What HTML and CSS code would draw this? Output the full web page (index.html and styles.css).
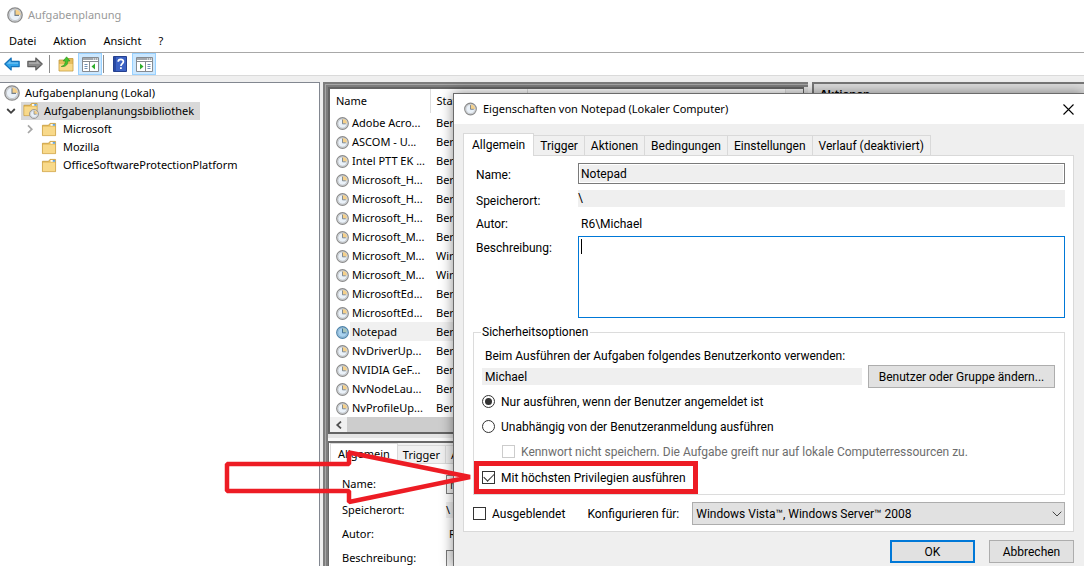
FILE: index.html
```html
<!DOCTYPE html>
<html lang="de">
<head>
<meta charset="utf-8">
<title>Aufgabenplanung</title>
<link rel="stylesheet" href="styles.css">
</head>
<body>
<svg class="defs" aria-hidden="true">
  <symbol id="clock" viewBox="0 0 16 16">
    <circle cx="8" cy="8" r="7.2" fill="#d9dcdf" stroke="#8a8a8a" stroke-width="1.3"/>
    <circle cx="8" cy="8" r="5.6" fill="#eaf1f8" stroke="#b4b8bc" stroke-width=".7"/>
    <path d="M8 8V2.4A5.6 5.6 0 0 1 13.6 8Z" fill="#f5d08a"/>
    <path d="M8 3.2V8.4H12" fill="none" stroke="#75808a" stroke-width="1.1"/>
  </symbol>
  <symbol id="clocksel" viewBox="0 0 16 16">
    <circle cx="8" cy="8" r="7.2" fill="#a3c6e0" stroke="#4c82a8" stroke-width="1.3"/>
    <circle cx="8" cy="8" r="5.6" fill="#a9d2ee" stroke="#7fa9c8" stroke-width=".7"/>
    <path d="M8 8V2.4A5.6 5.6 0 0 1 13.6 8Z" fill="#a9c5b8"/>
    <path d="M8 3.2V8.4H12" fill="none" stroke="#35658c" stroke-width="1.1"/>
  </symbol>
  <symbol id="folder" viewBox="0 0 16 16">
    <path d="M1 3.5H7.500L9 1.500H15V14.5H1Z" fill="#e6bd5c" stroke="#c99c3e" stroke-width=".9"/>
    <path d="M9.600 2.2H14.5V4H9.600Z" fill="#fff"/><path d="M12 2.2H14.5V4H12Z" fill="#5aa0dc"/>
    <path d="M1.4 5H14.6V14.2H1.4Z" fill="#f8d98a"/>
  </symbol>
  <symbol id="arrow" viewBox="0 0 16 14">
    <path d="M.8 7L7.2 1V4.4H15.2V9.6H7.2V13Z" stroke-width="1.1" stroke-linejoin="round"/>
    <path d="M3 6.8L6.4 3.6V5.6H14V6.8Z" fill="#fff" fill-opacity=".35" stroke="none"/>
  </symbol>
  <symbol id="pane" viewBox="0 0 17 15">
    <path d="M.5 .5H16.5V14.5H.5Z" fill="#fff" stroke="#868b91"/>
    <path d="M1 1H16V4H1Z" fill="#a3a8ad"/><path d="M1 3.5H16" stroke="#fff"/><path d="M1 4.5H16" stroke="#868b91"/>
    <path d="M11 2H12M13 2H14M15 2H16" stroke="#fff"/>
  </symbol>
</svg>

<div class="app">
  <header class="titlebar"><svg class="ic16"><use href="#clock"/></svg><span>Aufgabenplanung</span></header>
  <nav class="menubar">
    <button>Datei</button><button>Aktion</button><button>Ansicht</button><button>?</button>
  </nav>
  <div class="toolbar">
    <button class="tool" aria-label="Zurück"><svg class="arr back"><use href="#arrow"/></svg></button>
    <button class="tool" aria-label="Vorwärts"><svg class="arr fwd"><use href="#arrow"/></svg></button>
    <i class="sep"></i>
    <button class="tool" aria-label="Nach oben">
      <svg class="ic16" viewBox="0 0 16 16"><path d="M1 4H8L9.5 2.5H15V15H1Z" fill="#e6bd5c" stroke="#c29a3e" stroke-width=".8"/><path d="M1.5 8H14.5V14.5H1.5Z" fill="#f8d98a"/><path d="M3.2 10.5C6.5 9.5 7.4 7.6 7.3 5H5.2L8.6 .8L12 5H9.8C10 8.4 8 11 3.2 10.5Z" fill="#45c32e" stroke="#2d8f1c" stroke-width=".6"/></svg>
    </button>
    <button class="tool on" aria-label="Konsolenstruktur">
      <svg class="pn" viewBox="0 0 17 15"><use href="#pane"/><path d="M7.5 5V14" stroke="#868b91"/><path d="M2.5 7.5H5.5M2.5 9.5H5.5M2.5 11.5H5.5" stroke="#6f90b5"/><path d="M13 6.5V12.5L9.5 9.5Z" fill="#2fae2a"/></svg>
    </button>
    <i class="sep"></i>
    <button class="tool" aria-label="Hilfe">
      <svg class="help" viewBox="0 0 14 16"><path d="M.5 .5H13.5V15.5H.5Z" fill="#3c62c4" stroke="#24408f"/><path d="M1 1H3V15H1Z" fill="#2a4aa3"/><path d="M5.2 5.8C5.2 2.6 10.6 2.7 10.4 5.6C10.3 7.6 8 7.5 7.9 10" fill="none" stroke="#fff" stroke-width="1.7"/><path d="M7 11.2H8.8V13H7Z" fill="#fff"/></svg>
    </button>
    <button class="tool on" aria-label="Aktionsbereich">
      <svg class="pn" viewBox="0 0 17 15"><use href="#pane"/><path d="M9.5 5V14" stroke="#868b91"/><path d="M11.5 7.5H14.5M11.5 9.5H14.5M11.5 11.5H14.5" stroke="#6f90b5"/><path d="M4 6.5V12.5L7.5 9.5Z" fill="#2fae2a"/></svg>
    </button>
  </div>

  <main class="work">
    <ul class="tree">
      <li class="root"><svg class="ic16"><use href="#clock"/></svg><span>Aufgabenplanung (Lokal)</span></li>
      <li class="lib"><svg class="chev" viewBox="0 0 10 10"><path d="M1.2 3L5 6.8L8.8 3" fill="none" stroke="#404040" stroke-width="1.8"/></svg>
        <span class="sel"><svg class="lic" viewBox="0 0 18 18"><use href="#folder" x="1" y="0" width="15" height="15"/><use href="#clock" x="7" y="7" width="10" height="10"/></svg>Aufgabenplanungsbibliothek</span></li>
      <li class="sub"><svg class="chev" viewBox="0 0 10 10"><path d="M3 1.4L6.8 5.2L3 9" fill="none" stroke="#a6a6a6" stroke-width="1.7"/></svg><svg class="fic"><use href="#folder"/></svg><span>Microsoft</span></li>
      <li class="sub"><i class="chev"></i><svg class="fic"><use href="#folder"/></svg><span>Mozilla</span></li>
      <li class="sub"><i class="chev"></i><svg class="fic"><use href="#folder"/></svg><span>OfficeSoftwareProtectionPlatform</span></li>
    </ul>

    <section class="center">
      <div class="list">
        <div class="scroll">
        <table>
          <thead><tr><th class="c1">Name</th><th class="c2">Status</th><th></th></tr></thead>
          <tbody>
            <tr><td><svg><use href="#clock"/></svg>Adobe Acro...</td><td>Bereit</td><td></td></tr>
            <tr><td><svg><use href="#clock"/></svg>ASCOM - U...</td><td>Bereit</td><td></td></tr>
            <tr><td><svg><use href="#clock"/></svg>Intel PTT EK ...</td><td>Bereit</td><td></td></tr>
            <tr><td><svg><use href="#clock"/></svg>Microsoft_H...</td><td>Bereit</td><td></td></tr>
            <tr><td><svg><use href="#clock"/></svg>Microsoft_H...</td><td>Bereit</td><td></td></tr>
            <tr><td><svg><use href="#clock"/></svg>Microsoft_H...</td><td>Bereit</td><td></td></tr>
            <tr><td><svg><use href="#clock"/></svg>Microsoft_M...</td><td>Bereit</td><td></td></tr>
            <tr><td><svg><use href="#clock"/></svg>Microsoft_M...</td><td>Wird ausgeführt</td><td></td></tr>
            <tr><td><svg><use href="#clock"/></svg>Microsoft_M...</td><td>Wird ausgeführt</td><td></td></tr>
            <tr><td><svg><use href="#clock"/></svg>MicrosoftEd...</td><td>Bereit</td><td></td></tr>
            <tr><td><svg><use href="#clock"/></svg>MicrosoftEd...</td><td>Bereit</td><td></td></tr>
            <tr class="cur"><td><svg><use href="#clocksel"/></svg>Notepad</td><td>Bereit</td><td></td></tr>
            <tr><td><svg><use href="#clock"/></svg>NvDriverUp...</td><td>Bereit</td><td></td></tr>
            <tr><td><svg><use href="#clock"/></svg>NVIDIA GeF...</td><td>Bereit</td><td></td></tr>
            <tr><td><svg><use href="#clock"/></svg>NvNodeLau...</td><td>Bereit</td><td></td></tr>
            <tr><td><svg><use href="#clock"/></svg>NvProfileUp...</td><td>Bereit</td><td></td></tr>
          </tbody>
        </table>
        <i class="vbar"></i>
        </div>
        <div class="hbar"><button aria-label="Nach links"><svg viewBox="0 0 8 8"><path d="M6 .5L2.2 4L6 7.5" fill="none" stroke="#505050" stroke-width="1.7"/></svg></button></div>
      </div>
      <div class="detail">
        <div class="tabs small"><button class="active">Allgemein</button><button>Trigger</button><button>Aktionen</button></div>
        <div class="props">
          <label for="pn">Name:</label><input id="pn" value="Notepad" readonly>
          <span>Speicherort:</span><span class="loc">\</span>
          <span>Autor:</span><span class="aut">R6\Michael</span>
          <label for="pb">Beschreibung:</label><textarea id="pb" readonly></textarea>
        </div>
      </div>
    </section>

    <aside class="actions"><h2>Aktionen</h2></aside>
  </main>
</div>

<section class="dialog" role="dialog" aria-labelledby="dt">
  <header><svg><use href="#clock"/></svg><h1 id="dt">Eigenschaften von Notepad (Lokaler Computer)</h1>
    <button aria-label="Schließen"><svg viewBox="0 0 11 11"><path d="M.5 .5L10.5 10.5M10.5 .5L.5 10.5" stroke="#000" stroke-width="1.1"/></svg></button></header>
  <div class="body">
    <div class="tabs"><button class="active">Allgemein</button><button>Trigger</button><button>Aktionen</button><button>Bedingungen</button><button>Einstellungen</button><button>Verlauf (deaktiviert)</button></div>
    <div class="panel">
      <div class="form">
        <label for="n">Name:</label><input id="n" class="name" value="Notepad" readonly>
        <span class="low">Speicherort:</span><span class="flat">\</span>
        <span class="low">Autor:</span><span class="author">R6\Michael</span>
        <label for="b" class="top">Beschreibung:</label><div class="desc"><textarea id="b"></textarea><i class="caret"></i></div>
      </div>
      <fieldset>
        <legend>Sicherheitsoptionen</legend>
        <p>Beim Ausführen der Aufgaben folgendes Benutzerkonto verwenden:</p>
        <div class="account"><span class="flat">Michael</span><button class="btn">Benutzer oder Gruppe ändern...</button></div>
        <label class="opt"><input type="radio" name="run" checked>Nur ausführen, wenn der Benutzer angemeldet ist</label>
        <label class="opt"><input type="radio" name="run">Unabhängig von der Benutzeranmeldung ausführen</label>
        <label class="opt off"><input type="checkbox" disabled>Kennwort nicht speichern. Die Aufgabe greift nur auf lokale Computerressourcen zu.</label>
        <label class="opt priv"><input type="checkbox" checked>Mit höchsten Privilegien ausführen</label>
      </fieldset>
      <div class="config">
        <label class="hide"><input type="checkbox">Ausgeblendet</label>
        <label for="os">Konfigurieren für:</label>
        <div class="pick"><select id="os"><option>Windows Vista™, Windows Server™ 2008</option></select><svg viewBox="0 0 10 6"><path d="M.7 .7L5 5L9.3 .7" fill="none" stroke="#444"/></svg></div>
      </div>
    </div>
    <footer><button class="btn ok">OK</button><button class="btn">Abbrechen</button></footer>
  </div>
</section>

<svg class="marks" viewBox="0 0 480 60" aria-hidden="true" fill="none" stroke="#ed1c24">
  <path d="M3 19H125V7.500L246 32L125 57V46H3Z" stroke-width="4.500" stroke-linejoin="bevel"/>
  <path d="M252.500 18.500H471.500V46.500H252.500Z" stroke-width="5"/>
</svg>
</body>
</html>
```
FILE: styles.css
```css
* { box-sizing: border-box; }
body { margin: 0; overflow: hidden; background: #fff; color: #000; font: 11px/16px "Noto Sans", "Open Sans", sans-serif; }
button, input, select, textarea { font: inherit; color: inherit; margin: 0; padding: 0; border: 0; border-radius: 0; background: none; outline: 0; }
svg { display: block; flex: none; }
.defs { position: absolute; width: 0; height: 0; }
.ic16 { width: 16px; height: 16px; }

.app { display: flex; flex-direction: column; height: 100vh; background: #efefef; }
.titlebar { display: flex; align-items: center; gap: 5px; height: 29px; padding-left: 7px; background: #fff; color: #999; }
.menubar { display: flex; gap: 17px; align-items: center; height: 23px; padding-left: 9px; background: #fff; }
.toolbar { display: flex; align-items: center; height: 24px; background: #fff; border-top: 1px solid #a8a8a8; border-bottom: 1px solid #dadada; }
.tool { display: flex; align-items: center; justify-content: center; width: 23px; height: 22px; }
.tool.on { width: 24px; margin-left: 1px; background: #cce8ff; border: 1px solid #99d1ff; }
.sep { width: 1px; height: 18px; margin: 0 4px 0 3px; background: #8d8d8d; }
.on + .sep { margin-left: 1px; }
.arr { width: 16px; height: 14px; }
.back { fill: #2ea3ea; stroke: #1673ba; }
.fwd { fill: #8b8b8b; stroke: #606060; transform: scaleX(-1); }
.pn { width: 17px; height: 15px; }
.help { width: 14px; height: 16px; }

.work { flex: 1; display: flex; min-height: 0; padding-top: 6px; }
.tree { flex: 0 0 320px; margin: 0; padding: 1px 0 0; list-style: none; background: #fff; border: solid #828790; border-width: 1px 1px 0 0; }
.tree li { display: flex; align-items: center; height: 18px; }
.root { padding-left: 4px; gap: 5px; }
.lib { padding-left: 6px; gap: 5px; }
.sel { display: flex; align-items: center; gap: 4px; height: 18px; padding: 0 6px 0 1px; background: #d9d9d9; }
.lic { width: 18px; height: 18px; }
.chev { width: 10px; height: 10px; flex: none; }
.sub { padding-left: 25px; gap: 6px; }
.fic { width: 16px; height: 15px; }

.center { flex: 0 0 485px; display: flex; flex-direction: column; gap: 7px; margin-left: 3px; padding: 5px 4px 0 5px; background: #e4e4e4; box-shadow: inset 2px 2px #7d7d7d, inset 3px 3px #a6a6a6, inset 5px 5px #7d7d7d; }
.list { border: solid #646464; border-width: 2px 1px 2px 2px; background: #fff; }
.scroll { display: flex; overflow: hidden; }
table { flex: 1; border-collapse: collapse; table-layout: fixed; }
th, td { height: 19px; padding: 0 0 0 6px; text-align: left; font-weight: 400; line-height: 16px; white-space: nowrap; }
th { height: 24px; border-right: 1px solid #dedede; }
.c1 { width: 100px; }
.c2 { width: 97px; }
td svg { display: inline-block; width: 13px; height: 13px; margin-right: 3px; vertical-align: -3px; }
.cur td { background: #f0f0f0; }
.cur td:first-child { background: linear-gradient(90deg, #fff 20px, #f0f0f0 20px); }
.vbar { width: 17px; background: #f0f0f0; }
.hbar { height: 15px; background: #cdcdcd; }
.hbar button { display: flex; align-items: center; justify-content: center; width: 17px; height: 15px; background: #f0f0f0; }
.hbar svg { width: 8px; height: 8px; }
.detail { flex: 1; min-height: 0; overflow: hidden; padding-left: 1px; background: #fff; border: solid #696969; border-width: 2px 0 0 1px; box-shadow: 0 -3px #f8f8f8; }

.tabs { display: flex; align-items: flex-end; }
.tabs button { height: 20px; padding: 0 6px; background: #f0f0f0; border: solid #d9d9d9; border-width: 1px 1px 0 0; white-space: nowrap; }
.tabs .active { height: 23px; padding: 0 8px; background: #fff; border-left-width: 1px; margin-bottom: -1px; position: relative; }
.small { border-bottom: 1px solid #d9d9d9; background: #f0f0f0; }
.tabs.small button { height: 18px; padding: 0 5px; }
.tabs.small .active { height: 21px; padding: 0 7px; }
.props { display: grid; grid-template-columns: 104px 1fr; grid-template-rows: 18px 17px 16px 60px; row-gap: 8px; padding: 11px 10px 0 12px; align-items: center; }
.props input { height: 19px; padding-left: 3px; background: #efefef; border: 1px solid #7a7a7a; }
.props .loc { background: #efefef; }
.props .aut { padding-left: 3px; }
.props label[for="pb"] { align-self: start; }
.props textarea { height: 60px; background: #efefef; border: 1px solid #7a7a7a; resize: none; }

.actions { flex: 1; margin-left: 4px; background: #fff; border: solid #777; border-width: 2px 0 0 2px; }
.actions h2 { margin: 0; padding-left: 6px; font-size: 11px; line-height: 20px; background: #dcdcdc; }

.dialog { position: absolute; left: 453px; top: 93px; right: 0; bottom: 0; background: #efefef; border: solid #6b6b6b; border-width: 1px 0 0 1px; box-shadow: 0 0 12px rgba(0, 0, 0, .45); font: 12px/14px Roboto, "Liberation Sans", sans-serif; }
.dialog header { display: flex; align-items: center; gap: 6px; height: 30px; padding: 0 10px; background: #fff; font-family: "Noto Sans", sans-serif; }
.dialog header > svg { width: 13px; height: 14px; }
.dialog h1 { flex: 1; margin: 0; font-size: 11px; font-weight: 400; }
.dialog header button svg { width: 11px; height: 11px; }
.body { padding: 9px 10px 0 9px; }
.panel { padding: 7px 8px 6px 9px; background: #fff; border: 1px solid #d9d9d9; }
.form { display: grid; grid-template-columns: 102px 1fr; grid-template-rows: 21px 17px 17px 82px; row-gap: 6px; padding-left: 3px; align-items: center; }
.name { height: 21px; padding: 1px 0 0 2px; background: #efefef; border: 1px solid #7a7a7a; box-shadow: inset 0 0 0 1px #fff; }
.flat { height: 17px; line-height: 17px; background: #efefef; }
.low, .author { padding-top: 4px; }
.author { padding-left: 3px; }
.form label { padding-top: 2px; }
.form .top { align-self: start; padding-top: 5px; }
.desc { position: relative; height: 82px; }
.desc textarea { display: block; width: 100%; height: 82px; padding: 3px; border: 1px solid #0078d7; background: #fff; resize: none; }
.caret { position: absolute; left: 3px; top: 3px; width: 1px; height: 15px; background: #000; }
fieldset { margin: 7px 0 0; padding: 10px 9px 4px 8px; border: 1px solid #dcdcdc; min-width: 0; }
legend { padding: 0 2px 0 1px; margin-left: -1px; }
fieldset p { margin: 0 0 2px; padding-left: 3px; }
.account { display: flex; align-items: center; gap: 6px; margin-bottom: 1px; }
.account .flat { flex: 1; padding-left: 3px; line-height: 19px; }
.btn { height: 23px; padding: 0 6px; background: #e1e1e1; border: 1px solid #adadad; white-space: nowrap; }
.account .btn { min-width: 187px; }
.opt { display: flex; align-items: center; gap: 6px; height: 25px; white-space: nowrap; }
.off { padding-left: 20px; color: #6d6d6d; }
.priv { margin-top: 1px; }
input[type="radio"], input[type="checkbox"] { appearance: none; flex: none; width: 13px; height: 13px; border: 1px solid #333; background: #fff; display: grid; place-items: center; }
input[type="radio"] { border-radius: 50%; }
input[type="radio"]:checked::before { content: ""; width: 7px; height: 7px; border-radius: 50%; background: #333; }
input[type="checkbox"]:checked::before { content: ""; width: 9px; height: 5px; margin-bottom: 3px; border: solid #333; border-width: 0 0 1px 1px; transform: rotate(-45deg); }
input[type="checkbox"]:disabled { border-color: #ccc; }
.config { display: flex; align-items: center; margin-top: 7px; }
.hide { display: flex; align-items: center; gap: 6px; margin-right: 22px; }
.pick { position: relative; flex: 1; margin-left: 13px; }
.pick select { appearance: none; display: block; width: 100%; height: 23px; padding-left: 3px; background: #e1e1e1; border: 1px solid #adadad; }
.pick svg { position: absolute; right: 3px; top: 9px; width: 10px; height: 6px; pointer-events: none; }
.dialog footer { display: flex; justify-content: flex-end; gap: 14px; margin-top: 8px; }
.dialog footer .btn { width: 85px; }
.dialog footer .ok { border: 2px solid #0078d7; }

.marks { position: absolute; left: 224px; top: 445px; width: 480px; height: 60px; pointer-events: none; }
```
